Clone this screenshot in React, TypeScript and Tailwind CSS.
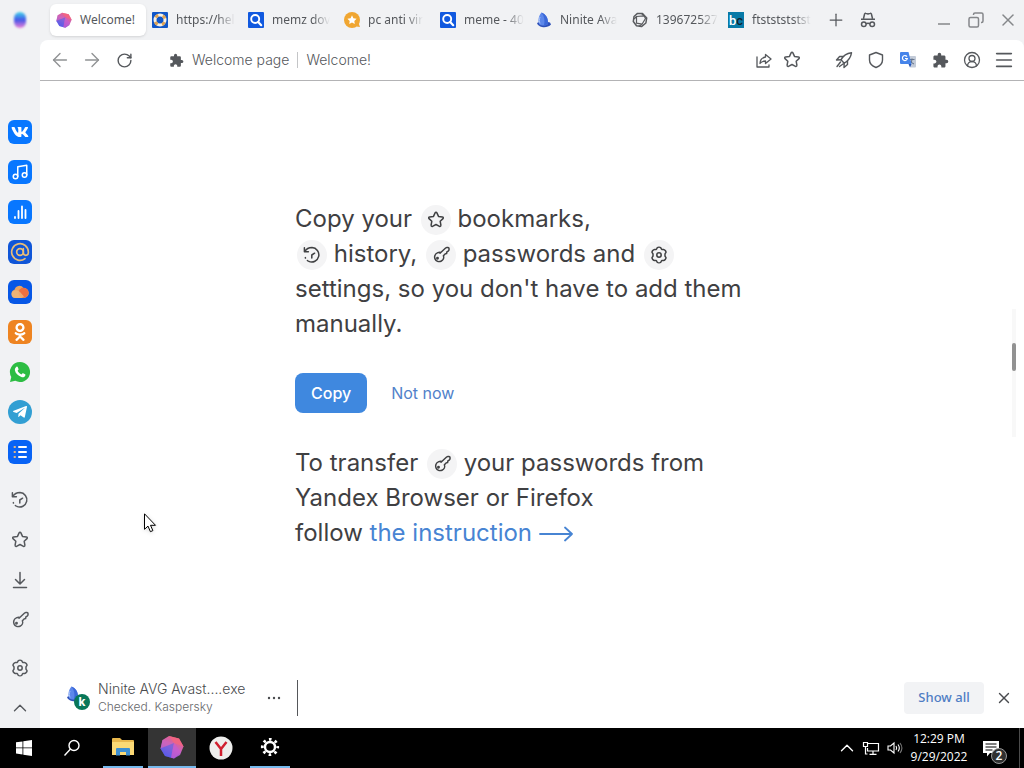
import React from 'react';
import { FaOdnoklassniki, FaTelegramPlane, FaVk } from 'react-icons/fa';
import { MdExtension } from 'react-icons/md';
import { ArrowLeft, ArrowRight, AtSign, ChevronUp, CircleUserRound, Menu, Music, Plus, RotateCw, X } from 'lucide-react';

interface IconProps {
  size?: number;
}

const StarIcon: React.FC<IconProps> = ({ size = 20 }) => (
  <svg width={size} height={size} viewBox="0 0 20 20" fill="none" stroke="currentColor" strokeWidth="1.5" strokeLinejoin="round">
    <path d="M9.1 2.9c.4-.8 1.4-.8 1.8 0l1.6 3.5 3.9.5c.9.1 1.2 1.1.6 1.7l-2.8 2.7.7 3.9c.2.9-.7 1.5-1.4 1.1L10 14.5l-3.5 1.8c-.7.4-1.6-.2-1.4-1.1l.7-3.9L3 8.6c-.6-.6-.3-1.6.6-1.7l3.9-.5z" />
  </svg>
);

const HistoryIcon: React.FC<IconProps> = ({ size = 20 }) => (
  <svg width={size} height={size} viewBox="0 0 20 20" fill="none" stroke="currentColor" strokeWidth="1.5" strokeLinecap="round" strokeLinejoin="round">
    <path d="M2.400 2.800v4h4M2.800 6.600C4.300 4 7 2.600 10 2.600a7.200 7.200 0 1 1-3.200 13.800" />
    <path d="M9.800 13V10l2.800-1.800" />
    <path d="M3.300 12.600a7.200 7.200 0 0 0 3.500 3.800" strokeDasharray="0.500 3" />
  </svg>
);

const KeyIcon: React.FC<IconProps> = ({ size = 20 }) => (
  <svg width={size} height={size} viewBox="0 0 20 20" fill="none" stroke="currentColor" strokeWidth="1.5" strokeLinejoin="round">
    <path d="M9 8.200 14.600 3c.4-.4.900-.6 1.400-.6h1c.6 0 1 .4 1 1v1.300c0 .5-.2.800-.5 1.100l-1.600 1.100-.3 1.600-1.500.4-1.700 1.800c.8 2.200-.2 4.600-2.400 5.500-2.300.9-5 0-6-2.300-1-2.300 0-5 2.300-6 1-.5 2-.8 2.700-.7z" />
    <circle cx="6.500" cy="13.300" r="0.700" fill="currentColor" />
  </svg>
);

const GearIcon: React.FC<IconProps> = ({ size = 20 }) => (
  <svg width={size} height={size} viewBox="0 0 20 20" fill="none" stroke="currentColor" strokeWidth="1.5" strokeLinejoin="round">
    <path d="M8.200 2.800c.8-.7 2.800-.7 3.600 0l.9 1.700 1.800-.1c1.200.1 2.600 1.800 2.500 2.900l-1 1.500v2.400l1 1.500c.1 1.100-1.300 2.800-2.500 2.900l-1.800-.1-.9 1.700c-.8.7-2.800.7-3.600 0l-.9-1.700-1.800.1C4.300 15.500 2.900 13.800 3 12.700l1-1.500V8.800L3 7.300C2.900 6.200 4.300 4.500 5.500 4.400l1.800.1z" />
    <circle cx="10" cy="10" r="2.200" />
  </svg>
);

const DownloadIcon = () => (
  <svg width="20" height="20" viewBox="0 0 20 20" fill="none" stroke="currentColor" strokeWidth="1.500" strokeLinecap="round" strokeLinejoin="round">
    <path d="M10 2.500v11M5.500 9.500 10 14l4.500-4.500M3.500 17.500h13" />
  </svg>
);

const ShareIcon = () => (
  <svg width="18" height="18" viewBox="0 0 18 18" fill="none" stroke="currentColor" strokeWidth="1.300" strokeLinejoin="round" strokeLinecap="round">
    <path d="M2 6v10h12v-2" />
    <path d="M10.500 3.500 16 8l-5.500 4.500V10C8 10 6.200 10.800 5 12.500c.2-3.500 2-6 5.500-6.500z" />
  </svg>
);

const RocketIcon = () => (
  <svg width="18" height="18" viewBox="0 0 18 18" fill="none" stroke="currentColor" strokeWidth="1.400" strokeLinejoin="round" strokeLinecap="round">
    <path d="M16.500 1.800c-4.600.6-8.300 3-10.500 7l3.200 3.400c4-2.300 6.600-5.800 7.300-10.400z" />
    <path d="M8.500 5.500H4.600L1.500 9 6 8.800M12.500 9.700v3.800L9 16.500l.2-4.300M5.500 11 2 15.500M8 13l-3.500 2.500" />
  </svg>
);

const ShieldIcon = () => (
  <svg width="18" height="18" viewBox="0 0 18 18" fill="none" stroke="currentColor" strokeWidth="1.400" strokeLinejoin="round">
    <path d="M9 1.500 15.500 4v5c0 3.600-2.600 6-6.500 7.500C5.100 15 2.500 12.600 2.500 9V4z" />
  </svg>
);

const TranslateIcon = () => (
  <svg width="18" height="18" viewBox="0 0 18 18">
    <path d="M7 5h9a1 1 0 0 1 1 1v9.500a1 1 0 0 1-1 1h-4.500z" fill="#c3cbd8" />
    <path d="M10.500 8.500h5M13 7.500v1c0 2-1.200 3.500-2.500 4.500M11.500 10c.8 1.500 2 2.500 3.500 3" stroke="#66758c" strokeWidth="1.100" fill="none" />
    <path d="M2 1h7.500l3 12H2a1 1 0 0 1-1-1V2a1 1 0 0 1 1-1z" fill="#4684ea" />
    <path d="M9.500 13h3l-1.500 3.500z" fill="#2855b5" />
    <path d="M8 5.600A2.500 2.500 0 1 0 8.400 7.500H6" fill="none" stroke="#fff" strokeWidth="1.200" />
  </svg>
);

const IncognitoIcon = () => (
  <svg width="16" height="16" viewBox="0 0 16 16" fill="none" stroke="currentColor" strokeWidth="1.500" strokeLinejoin="round">
    <path d="M3.500 6.500 4.600 2c.2-.6.700-.8 1.200-.6L8 2l2.200-.6c.5-.2 1 0 1.200.6l1.100 4.500M1 7.200h14M6 12c1-1 3-1 4 0" />
    <circle cx="3.800" cy="12.200" r="2.300" />
    <circle cx="12.200" cy="12.200" r="2.300" />
  </svg>
);

const AmigoIcon: React.FC<IconProps> = ({ size = 18 }) => (
  <svg width={size} height={size} viewBox="0 0 24 24">
    <defs>
      <linearGradient id="gem" x1="0.800" y1="0" x2="0.200" y2="1">
        <stop offset="0" stopColor="#f2607b" />
        <stop offset="0.500" stopColor="#c763bd" />
        <stop offset="1" stopColor="#5b50e8" />
      </linearGradient>
    </defs>
    <path d="M9 1 19 3.500l4.500 8L20 20l-6 3.500L5 21 .5 13.500 2.500 5z" fill="url(#gem)" />
    <path d="M9 1 19 3.500l4.500 8L14 8z" fill="#f5657e" opacity="0.800" />
    <path d="M2.500 5 14 8 .5 13.500z" fill="#cd65bd" opacity="0.600" />
    <path d="M.5 13.500 14 8l-3 14.700L5 21z" fill="#4863f1" opacity="0.550" />
    <path d="m14 8 7 9-7 6.500-3-.8z" fill="#c65bd3" opacity="0.700" />
  </svg>
);

const NiniteIcon: React.FC<IconProps> = ({ size = 16 }) => (
  <svg width={size} height={size} viewBox="0 0 16 16">
    <path d="M1 11c4-1.500 8-2 13-.5l1 2c-2 2.300-6 3.300-9 2.500-2.500-.6-4.500-2-5-4z" fill="#2d50b9" />
    <path d="M5.500.5C9.500 2 12.500 6 12 12c-2 2-6.500 2-8.500.5C1.800 9.500 2 4.500 5.500.5z" fill="#5c87ea" />
    <path d="M5.500.5C9.500 2 12.500 6 12 12c-1 1-2.500 1.300-4 1.300C9 9 8.500 4.500 5.500.5z" fill="#3b68d8" />
    <path d="M4 5c-.8 2.500-.8 4.500 0 6.500" fill="none" stroke="#a5c1fb" strokeWidth="1" />
  </svg>
);

const LifebuoyIcon = () => (
  <svg width="16" height="16" viewBox="0 0 16 16">
    <rect width="16" height="16" rx="1" fill="#1257c8" />
    <circle cx="8" cy="8" r="5" fill="none" stroke="#f6f2e9" strokeWidth="3" />
    <circle cx="8" cy="8" r="5" fill="none" stroke="#dfa353" strokeWidth="3" strokeDasharray="3.200 4.650" strokeDashoffset="-2.300" />
  </svg>
);

const SearchTileIcon = () => (
  <svg width="16" height="16" viewBox="0 0 16 16">
    <rect width="16" height="16" rx="1" fill="#1159df" />
    <circle cx="7.200" cy="7" r="4" fill="none" stroke="#fff" strokeWidth="1.900" />
    <path d="m10.200 10 3 3.200" stroke="#fff" strokeWidth="2.200" strokeLinecap="round" />
  </svg>
);

const StarBadgeIcon = () => (
  <svg width="16" height="16" viewBox="0 0 16 16">
    <circle cx="8" cy="8" r="8" fill="#f0a631" />
    <path d="M12.500 14.500 16 15l-1.500-4z" fill="#f0a631" />
    <path d="m8 3.300 1.400 2.900 3.200.5-2.300 2.200.5 3.200L8 10.600l-2.800 1.500.5-3.200-2.300-2.200 3.200-.5z" fill="#fff" />
  </svg>
);

const ApertureIcon = () => (
  <svg width="16" height="16" viewBox="0 0 16 16" fill="none" stroke="#5a5c5f" strokeWidth="1.500" strokeLinejoin="round">
    <path d="M5.500 1.400h5L14.700 6l-.8 5-4.400 3.600-5-.8L1.300 9.500 2 4.500z" />
    <path d="M4.500 4.500 12 3.800l1.500 2.700-3.500 5.700-5.500-1zM4.500 4.500 2 7M10 12.200l-3 2M12 3.800 9.500 1.600" strokeWidth="1.200" />
  </svg>
);

const BcIcon = () => (
  <span className="flex h-4 w-4 items-end justify-center bg-[#087aa7] font-['Roboto',sans-serif] text-[13px] leading-[15px] font-medium text-white">
    b<span className="text-[#11242e]">c</span>
  </span>
);

const NetworkIcon = () => (
  <svg width="18" height="16" viewBox="0 0 18 16" fill="none" stroke="#fff" strokeWidth="1.200">
    <path d="M5.500 3.500h11v7.500h-11v-3M11 11v3M7.500 14.400h7" />
    <path d="M1.500 2.500h4v4h-4zM3.500 6.500v7.500h2" />
  </svg>
);

const VolumeIcon = () => (
  <svg width="16" height="16" viewBox="0 0 16 16" fill="none" stroke="#fff" strokeWidth="1.100">
    <path d="M1 6v4h2.500L7 13V3L3.500 6z" />
    <path d="M9 6c.8 1.200.8 2.800 0 4M11 4.500c1.500 2 1.500 5 0 7" />
    <path d="M13 3c2.300 3 2.300 7 0 10" stroke="#777" />
  </svg>
);

const CloudIcon = () => (
  <svg width="20" height="20" viewBox="0 0 20 20">
    <path d="M5.500 16a4.200 4.200 0 0 1-1-8.200A5 5 0 0 1 13.500 6 5 5 0 0 1 14 16z" fill="#e8a462" />
    <circle cx="13.500" cy="10.800" r="5" fill="#f0703f" />
    <path d="M3 9c2-1.500 5-1 7 1l4 4.500c-2 2-7 1.500-9 1.500-4 0-4.500-5-2-7z" fill="#efb77d" opacity="0.800" />
  </svg>
);

const apps = [
  { name: 'VK', tile: 'rounded-md bg-[#0877ff]', icon: <FaVk size={18} /> },
  { name: 'Music', tile: 'rounded-md bg-[#0877ff]', icon: <Music size={18} strokeWidth={2} /> },
  {
    name: 'Statistics',
    tile: 'rounded-md bg-[#0877ff]',
    icon: (
      <svg width="16" height="16" viewBox="0 0 16 16" stroke="#fff" strokeWidth="1.800" strokeLinecap="round">
        <path d="M3 14v-1M6.500 14V7M10 14V2.500M13.500 14V6" />
      </svg>
    ),
  },
  { name: 'Mail', tile: 'rounded-md bg-[#1056d8] text-[#e9bd76]', icon: <AtSign size={20} strokeWidth={2} /> },
  { name: 'Cloud', tile: 'rounded-md bg-[#0757e6]', icon: <CloudIcon /> },
  { name: 'Odnoklassniki', tile: 'rounded-md bg-[#ee8421]', icon: <FaOdnoklassniki size={18} /> },
  {
    name: 'WhatsApp',
    tile: '',
    icon: (
      <svg width="22" height="22" viewBox="0 0 22 22">
        <path d="M11 1a10 10 0 1 1-4.700 18.800L1 21l1.300-5A10 10 0 0 1 11 1z" fill="#2dbd43" />
        <path d="M7.500 5.800c.5-.4 1-.2 1.200.3l.8 1.900c.2.400 0 .8-.9 1.700.9 1.700 2.100 2.900 3.900 3.700.8-1 1.200-1.300 1.600-1.100l2 1c.5.3.4.9 0 1.600-.7 1.200-2.300 1.600-3.700 1.100-3.400-1.100-6-3.700-6.500-6.700-.2-1.500.5-2.800 1.600-3.500z" fill="#fff" />
      </svg>
    ),
  },
  { name: 'Telegram', tile: 'rounded-full bg-[#329fd3]', icon: <FaTelegramPlane size={16} /> },
  {
    name: 'Tasks',
    tile: 'rounded-md bg-[#0863f5]',
    icon: (
      <svg width="16" height="16" viewBox="0 0 16 16" strokeWidth="2" strokeLinecap="round">
        <path d="M7 3h7M7 8h7M7 13h7" stroke="#fff" />
        <path d="M2.500 3H3M2.500 8H3M2.500 13H3" stroke="#e5b783" />
      </svg>
    ),
  },
];

const tools = [
  { name: 'History', icon: <HistoryIcon /> },
  { name: 'Bookmarks', icon: <StarIcon /> },
  { name: 'Downloads', icon: <DownloadIcon /> },
  { name: 'Passwords', icon: <KeyIcon /> },
];

const tabs = [
  { title: 'Welcome!', icon: <AmigoIcon size={16} /> },
  { title: 'https://hel', icon: <LifebuoyIcon /> },
  { title: 'memz dov', icon: <SearchTileIcon /> },
  { title: 'pc anti vir', icon: <StarBadgeIcon /> },
  { title: 'meme - 40', icon: <SearchTileIcon /> },
  { title: 'Ninite Ava', icon: <NiniteIcon /> },
  { title: '139672527', icon: <ApertureIcon /> },
  { title: 'ftststststst', icon: <BcIcon /> },
];

const Sidebar = () => (
  <aside className="flex w-10 shrink-0 flex-col bg-[#f1f2f4] text-[#55585c]">
    <button aria-label="Home" className="mb-[72px] flex h-10 items-center justify-center">
      <span className="h-4 w-3 rounded-full bg-linear-to-b from-[#42d2e8] via-[#4654e8] to-[#ec78d5] blur-[1px]" />
    </button>
    {apps.map((app) => (
      <button key={app.name} aria-label={app.name} className="flex h-10 items-center justify-center text-white">
        <span className={`flex h-6 w-6 items-center justify-center ${app.tile}`}>{app.icon}</span>
      </button>
    ))}
    <div className="mt-2 flex flex-col">
      {tools.map((tool) => (
        <button key={tool.name} aria-label={tool.name} className="flex h-10 items-center justify-center">
          {tool.icon}
        </button>
      ))}
    </div>
    <div className="mt-auto flex flex-col">
      <button aria-label="Settings" className="flex h-10 items-center justify-center"><GearIcon /></button>
      <button aria-label="Collapse" className="flex h-10 items-center justify-center"><ChevronUp size={22} strokeWidth={1.5} /></button>
    </div>
  </aside>
);

const TabBar = () => (
  <header className="flex h-10 items-center bg-[#f1f2f4] text-[#55585c]">
    <div role="tablist" className="ml-[10px] flex min-w-0">
      {tabs.map((tab, i) => (
        <button
          key={tab.title}
          role="tab"
          aria-selected={i === 0}
          className={`flex h-8 w-24 items-center gap-2 rounded-md px-1.5 ${i === 0 ? 'bg-white shadow-sm' : ''}`}
        >
          <span className="shrink-0">{tab.icon}</span>
          <span className={`font-['Noto_Sans',sans-serif] text-xs whitespace-nowrap ${i === 0 ? '' : 'mask-r-from-70%'}`}>
            {tab.title}
          </span>
        </button>
      ))}
    </div>
    <button aria-label="New tab" className="ml-0.5 flex h-8 w-8 items-center justify-center"><Plus size={20} strokeWidth={1.5} /></button>
    <button aria-label="Incognito" className="flex h-8 w-8 items-center justify-center"><IncognitoIcon /></button>
    <div className="ml-auto flex text-[#85878a]">
      <button aria-label="Minimize" className="flex h-8 w-8 items-center justify-center">
        <svg width="16" height="16" viewBox="0 0 16 16" stroke="currentColor" strokeWidth="1.500"><path d="M2 12h12" /></svg>
      </button>
      <button aria-label="Restore" className="flex h-8 w-8 items-center justify-center">
        <svg width="16" height="16" viewBox="0 0 16 16" fill="none" stroke="currentColor" strokeWidth="1.500">
          <rect x="1" y="5.500" width="9.500" height="9.500" rx="1.500" />
          <path d="M5.500 3V2.500A1.500 1.500 0 0 1 7 1h6.500A1.500 1.500 0 0 1 15 2.500V9a1.500 1.500 0 0 1-1.500 1.500H13" />
        </svg>
      </button>
      <button aria-label="Close" className="flex h-8 w-8 items-center justify-center"><X size={20} strokeWidth={1.8} /></button>
    </div>
  </header>
);

const iconButton = 'flex h-8 w-8 items-center justify-center';

const Toolbar = () => (
  <div className="bg-[#f1f2f4]">
    <div className="flex h-[41px] items-center rounded-t-lg border-b border-[#b3b3b5] bg-white px-1 text-[#55585c]">
      <button aria-label="Back" className={`${iconButton} text-[#909294]`}><ArrowLeft size={22} strokeWidth={1.5} /></button>
      <button aria-label="Forward" className={`${iconButton} text-[#909294]`}><ArrowRight size={22} strokeWidth={1.5} /></button>
      <button aria-label="Reload" className={iconButton}><RotateCw size={17} strokeWidth={2} /></button>
      <div className="ml-[29px] flex flex-1 items-center font-['Inter',sans-serif] text-sm font-light whitespace-nowrap">
        <MdExtension size={15} />
        <span className="ml-2">Welcome page</span>
        <span className="mx-2 h-4 w-px bg-[#c4c5c7]" />
        <span>Welcome!</span>
      </div>
      <button aria-label="Share" className="flex h-8 w-7 items-center justify-center"><ShareIcon /></button>
      <button aria-label="Add bookmark" className="mr-[22px] flex h-8 w-7 items-center justify-center"><StarIcon /></button>
      <button aria-label="Turbo" className={iconButton}><RocketIcon /></button>
      <button aria-label="Protection" className={iconButton}><ShieldIcon /></button>
      <button aria-label="Translate" className={iconButton}><TranslateIcon /></button>
      <button aria-label="Extensions" className={iconButton}><MdExtension size={17} /></button>
      <button aria-label="Profile" className={iconButton}><CircleUserRound size={18} strokeWidth={1.7} /></button>
      <button aria-label="Menu" className={iconButton}><Menu size={22} strokeWidth={1.8} /></button>
    </div>
  </div>
);

const Bubble: React.FC<{ children: React.ReactNode }> = ({ children }) => (
  <span className="ml-0.5 inline-flex h-[30px] w-[30px] items-center justify-center rounded-full bg-[#f4f4f5] align-middle">
    {children}
  </span>
);

const Welcome = () => (
  <main className="relative flex flex-1 items-center justify-center px-6 pt-px">
    <div className="w-full max-w-[474px] font-['Inter',sans-serif] text-[#3f4042]">
      <p className="text-2xl leading-[35px] whitespace-nowrap">
        Copy your <Bubble><StarIcon /></Bubble> bookmarks,
        <br />
        <Bubble><HistoryIcon /></Bubble> history, <Bubble><KeyIcon /></Bubble> passwords and <Bubble><GearIcon /></Bubble>
        <br />
        settings, so you don't have to add them
        <br />
        manually.
      </p>
      <div className="mt-8 mb-8 flex items-center gap-2 text-base">
        <button className="h-10 rounded-lg bg-[#3f88df] px-4 font-medium text-white">Copy</button>
        <button className="h-10 px-4 text-[#5181ca]">Not now</button>
      </div>
      <p className="text-2xl leading-[35px] whitespace-nowrap">
        To transfer <Bubble><KeyIcon /></Bubble> your passwords from
        <br />
        Yandex Browser or Firefox
        <br />
        follow{' '}
        <a href="#instruction" className="text-[#4784d3]">
          the instruction{' '}
          <svg className="inline" width="34" height="16" viewBox="0 0 34 16" fill="none" stroke="currentColor" strokeWidth="1.800" strokeLinecap="round" strokeLinejoin="round">
            <path d="M1 8h32M26 1.500 33 8l-7 6.500" />
          </svg>
        </a>
      </p>
    </div>
    <div className="absolute top-[228px] right-2 h-32 w-1 bg-[#f8f8f8]">
      <div className="mt-[34px] h-7 rounded-xs bg-[#929292]" />
    </div>
  </main>
);

const DownloadBar = () => (
  <footer className="flex h-[60px] items-center pr-1 pl-[26px] font-['Inter',sans-serif] text-[#494b4e]">
    <div className="relative h-6 w-6">
      <NiniteIcon size={16} />
      <span className="absolute right-0 bottom-0 flex h-4 w-4 items-center justify-center rounded-full bg-[#087759] text-xs font-bold text-white">
        k
      </span>
    </div>
    <div className="ml-2 w-[150px] font-light whitespace-nowrap">
      <p className="text-sm leading-[18px]">Ninite AVG Avast....exe</p>
      <p className="text-xs leading-[18px] text-[#66686b]">Checked. Kaspersky</p>
    </div>
    <button aria-label="More" className="ml-2 flex h-8 w-9 items-center justify-center">
      <svg width="14" height="4" viewBox="0 0 14 4" fill="currentColor">
        <circle cx="2" cy="2" r="1.200" /><circle cx="7" cy="2" r="1.200" /><circle cx="12" cy="2" r="1.200" />
      </svg>
    </button>
    <span className="ml-[5px] h-9 w-px bg-[#55575a]" />
    <button className="ml-auto h-8 w-20 rounded-sm bg-[#f2f3f5] font-['Noto_Sans',sans-serif] text-[13px] font-medium text-[#4f7dc4]">Show all</button>
    <button aria-label="Close downloads" className="ml-1 flex h-8 w-8 items-center justify-center"><X size={18} strokeWidth={1.8} /></button>
  </footer>
);

const Taskbar = () => (
  <div className="flex h-10 shrink-0 items-center bg-black text-white">
    <button aria-label="Start" className="flex h-10 w-12 items-center justify-center">
      <svg width="16" height="16" viewBox="0 0 16 16" fill="#fff">
        <path d="M0 2.300 6.500 1.400v6H0zM7.300 1.300 16 0v7.400H7.300zM0 8.300h6.500v6.200L0 13.600zM7.300 8.300H16V16l-8.700-1.300z" />
      </svg>
    </button>
    <button aria-label="Search" className="flex h-10 w-12 items-center justify-center">
      <svg width="18" height="18" viewBox="0 0 18 18" fill="none" stroke="#fff" strokeWidth="1.400">
        <circle cx="11" cy="6.500" r="5" /><path d="M7.500 10 1.500 16.500" />
      </svg>
    </button>
    <nav className="ml-[3px] flex gap-px">
      <button aria-label="File Explorer" className="flex h-10 w-12 flex-col items-center">
        <span className="flex flex-1 items-center">
          <svg width="22" height="20" viewBox="0 0 22 20">
            <path d="M0 2a1 1 0 0 1 1-1h7l2 2h11a1 1 0 0 1 1 1v14H0z" fill="#e9b84d" />
            <path d="M0 5h22v13H0z" fill="#fbd975" />
            <path d="M4 18.500V12a1 1 0 0 1 1-1h12a1 1 0 0 1 1 1v6.500h-4V15H8v3.500z" fill="#3d8fd2" />
          </svg>
        </span>
        <span className="h-0.5 w-10 bg-[#76b9ed]" />
      </button>
      <button aria-label="Browser" className="flex h-10 w-12 flex-col items-center bg-[#343434]">
        <span className="flex flex-1 items-center"><AmigoIcon size={24} /></span>
        <span className="h-0.5 w-12 bg-[#76b9ed]" />
      </button>
      <button aria-label="Yandex" className="flex h-10 w-12 items-center justify-center">
        <svg width="24" height="24" viewBox="0 0 24 24">
          <circle cx="12" cy="12" r="11.500" fill="#eeeeec" />
          <path d="m6.500 6 5.500 7 5.500-7M12 12.500V20" fill="none" stroke="#d01f2e" strokeWidth="2.500" />
        </svg>
      </button>
      <button aria-label="Settings" className="flex h-10 w-12 flex-col items-center">
        <span className="flex flex-1 items-center">
          <svg width="20" height="20" viewBox="0 0 20 20" fill="none" stroke="#fff">
            <circle cx="10" cy="10" r="5" strokeWidth="2.400" />
            <circle cx="10" cy="10" r="7.700" strokeWidth="2.800" strokeDasharray="2.600 3.448" strokeDashoffset="1.300" />
          </svg>
        </span>
        <span className="h-0.5 w-10 bg-[#76b9ed]" />
      </button>
    </nav>
    <div className="ml-auto flex items-center">
      <button aria-label="Hidden icons" className="flex h-10 w-6 items-center justify-center"><ChevronUp size={22} strokeWidth={1.500} /></button>
      <button aria-label="Network" className="flex h-10 w-6 items-center justify-center"><NetworkIcon /></button>
      <button aria-label="Volume" className="flex h-10 w-6 items-center justify-center"><VolumeIcon /></button>
      <button className="flex h-10 w-16 flex-col items-center justify-center font-['Open_Sans',sans-serif] text-xs leading-[18px] whitespace-nowrap">
        <span>12:29 PM</span>
        <span>9/29/2022</span>
      </button>
      <button aria-label="Notifications" className="relative flex h-10 w-12 items-center pl-3">
        <svg width="16" height="17" viewBox="0 0 16 17">
          <path d="M0 1h16v12H7l-3 3.500V13H0z" fill="#fff" />
          <path d="M2.500 4h11M2.500 7h11M2.500 10h7" stroke="#000" strokeWidth="1.200" />
        </svg>
        <span className="absolute right-3 bottom-1 flex h-4 w-4 items-center justify-center rounded-full border border-[#999] bg-[#303030] font-['Open_Sans',sans-serif] text-xs font-semibold">
          2
        </span>
      </button>
      <span className="mr-1 h-10 w-px bg-[#4b4b4b]" />
    </div>
  </div>
);

const App: React.FC = () => {
  return (
    <div className="relative flex min-h-screen flex-col bg-white">
      <div className="flex flex-1">
        <Sidebar />
        <div className="flex min-w-0 flex-1 flex-col">
          <TabBar />
          <Toolbar />
          <Welcome />
          <DownloadBar />
        </div>
      </div>
      <Taskbar />
      {/* mouse pointer */}
      <svg className="pointer-events-none absolute top-[513px] left-[144px] drop-shadow-sm" width="13" height="20" viewBox="0 0 13 20">
        <path d="M.5.800v15.500l3.500-3.200 2.400 5.600 2.500-1.100-2.400-5.300h5z" fill="#fff" stroke="#000" />
      </svg>
    </div>
  );
};

export default App;
